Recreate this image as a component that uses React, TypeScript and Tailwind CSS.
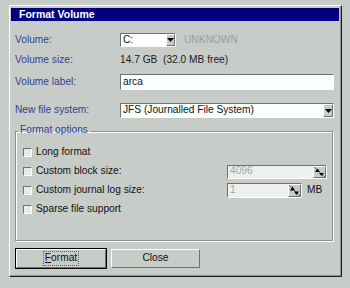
import React from "react";

const sunken = "border border-t-[#6e726e] border-l-[#6e726e] border-r-white border-b-white";
const raised = "border border-t-white border-l-white border-r-[#6e726e] border-b-[#6e726e]";

const DownArrow = () => (
    <svg width="7" height="4" viewBox="0 0 7 4">
        <path d="M0 0h7L3.5 4z" fill="#000" />
    </svg>
);

const SpinButton = ({ h }: { h: number }) => {
    const ih = h - 2;
    return (
        <div className={`${raised} bg-[#c8ccc8] w-[13px] shrink-0 flex`} style={{ height: h }}>
            <svg width="11" height={ih} viewBox={`0 0 11 ${ih}`}>
                <line x1="0" y1="0" x2="11" y2={ih} stroke="#6e726e" strokeWidth="1" />
                <path d={`M1 ${ih / 2}L3.5 1.5L6 ${ih / 2}z`} fill="#000" />
                <path d={`M5 ${ih / 2 + 1}h5L7.5 ${ih - 1}z`} fill="#000" />
            </svg>
        </div>
    );
};

const Check = ({ label, children }: { label: string; children?: React.ReactNode }) => (
    <div className="h-[19px] flex items-center pl-[7px]">
        <div className="w-[204px] flex items-center gap-[4px]">
            <div className={`${sunken} w-[9px] h-[9px] bg-[#e8eae8]`} />
            <span className="text-[#111]">{label}</span>
        </div>
        {children}
    </div>
);

const App = () => {
    return (
        <div className="w-[350px] h-[288px] bg-[#c8ccc8] pt-[5px] pl-[9px] font-['Liberation_Sans',Arial,sans-serif] text-[10.2px] leading-none">
            <div className="w-[333px] h-[272px] border border-t-white border-l-white border-r-[#1a1c1a] border-b-[#1a1c1a]">
                <div className="h-full border-r border-b border-r-[#8e928e] border-b-[#8e928e] flex flex-col">
                    <div className="mt-[2px] ml-[1px] w-[328px] h-[13px] bg-[#000080] text-white font-bold text-[10.5px] pl-[8px] flex items-center">
                        Format Volume
                    </div>

                    <div className="pl-[5px] flex flex-col">
                        <div className="mt-[12px] h-[14px] flex items-center">
                            <span className="w-[105px] text-[#33418f]">Volume:</span>
                            <div className={`${sunken} w-[56px] h-[14px] bg-white flex`}>
                                <span className="flex-1 pl-[2px] flex items-center text-[#111]">C:</span>
                                <div className={`${raised} w-[9px] bg-[#c8ccc8] flex items-center justify-center`}>
                                    <DownArrow />
                                </div>
                            </div>
                            <span className="ml-[8px] text-[#9a9e9a]">UNKNOWN</span>
                        </div>

                        <div className="mt-[6px] h-[14px] flex items-center">
                            <span className="w-[105px] text-[#33418f]">Volume size:</span>
                            <span className="text-[#1a1a1a]">14.7 GB&nbsp; (32.0 MB free)</span>
                        </div>

                        <div className="mt-[7px] h-[16px] flex items-center">
                            <span className="w-[105px] text-[#33418f]">Volume label:</span>
                            <div className={`${sunken} w-[214px] h-[16px] bg-[#fcfefc] pl-[2px] flex items-center text-[#111]`}>
                                arca
                            </div>
                        </div>

                        <div className="mt-[13px] h-[15px] flex items-center">
                            <span className="w-[105px] text-[#33418f]">New file system:</span>
                            <div className={`${sunken} w-[214px] h-[15px] bg-[#fcfefc] flex`}>
                                <span className="flex-1 pl-[2px] flex items-center text-[#111]">JFS (Journalled File System)</span>
                                <div className={`${raised} w-[10px] bg-[#c8ccc8] flex items-center justify-center`}>
                                    <DownArrow />
                                </div>
                            </div>
                        </div>

                        <fieldset className="mt-[7px] w-[318px] h-[116px] border border-[#8e928e] shadow-[1px_1px_0_#fff,inset_1px_1px_0_#fff]">
                            <legend className="ml-[2px] px-[2px] h-[12px] text-[#33418f]">Format options</legend>
                            <div className="mt-[6px] flex flex-col">
                                <Check label="Long format" />
                                <Check label="Custom block size:">
                                    <div className={`${sunken} w-[100px] h-[14px] bg-[#eef0ee] flex`}>
                                        <span className="flex-1 pl-[2px] flex items-center text-[#a0a4a0]">4096</span>
                                        <SpinButton h={12} />
                                    </div>
                                </Check>
                                <Check label="Custom journal log size:">
                                    <div className={`${sunken} w-[75px] h-[15px] bg-[#eef0ee] flex`}>
                                        <span className="flex-1 pl-[2px] flex items-center text-[#a0a4a0]">1</span>
                                        <SpinButton h={13} />
                                    </div>
                                    <span className="ml-[5px] text-[#111]">MB</span>
                                </Check>
                                <Check label="Sparse file support" />
                            </div>
                        </fieldset>

                        <div className="mt-[7px] flex items-center gap-[4px]">
                            <button className="w-[92px] h-[21px] border border-black bg-[#c8ccc8] flex">
                                <div className={`${raised} flex-1 flex items-center justify-center`}>
                                    <span className="border border-dotted border-[#666] px-[1px] py-[1px] text-[#111]">
                                        <span className="underline">F</span>ormat
                                    </span>
                                </div>
                            </button>
                            <button className={`${raised} w-[89px] h-[19px] bg-[#c8ccc8] flex items-center justify-center text-[#111]`}>
                                Close
                            </button>
                        </div>
                    </div>
                </div>
            </div>
        </div>
    );
};

export default App;
